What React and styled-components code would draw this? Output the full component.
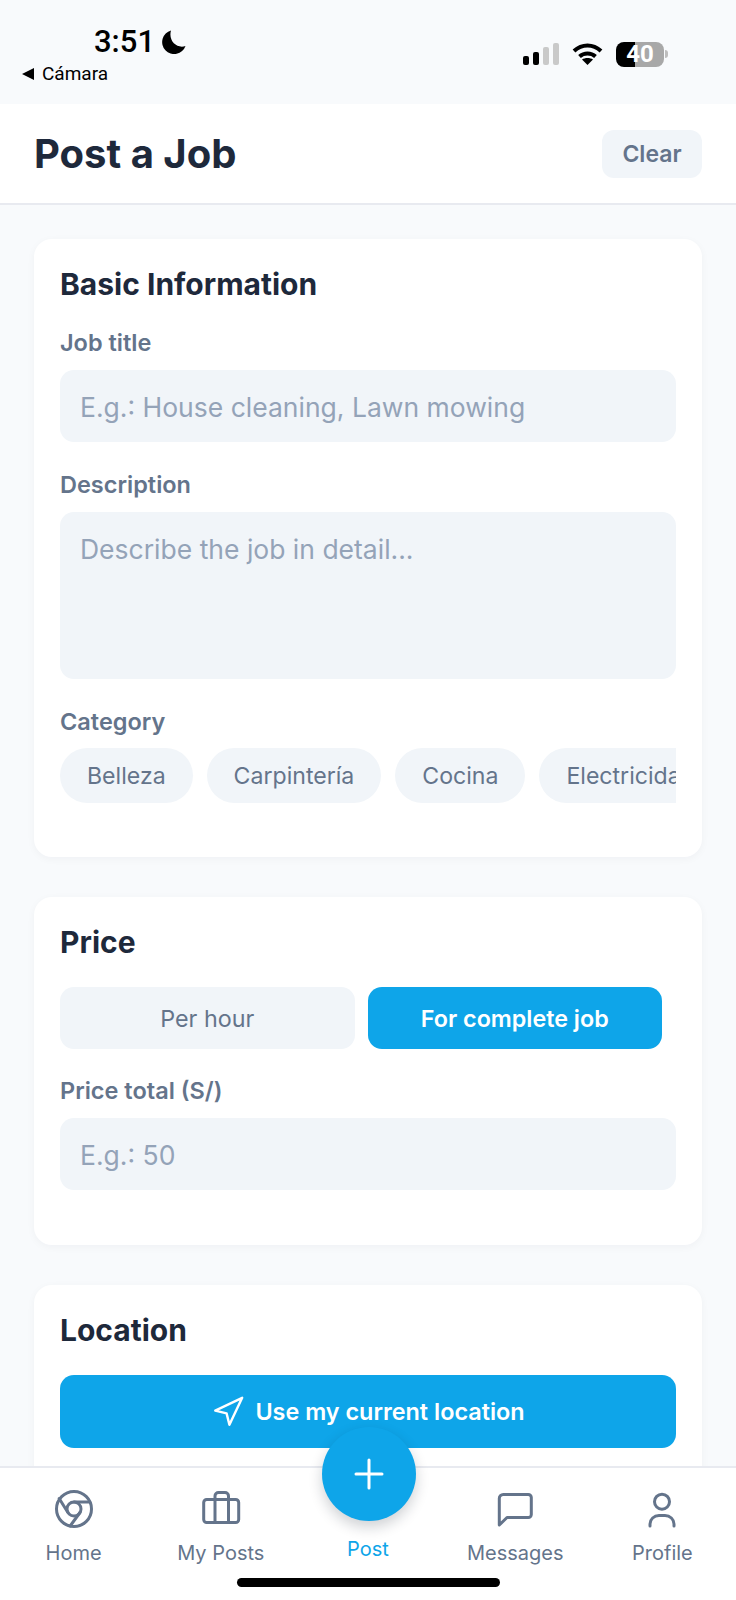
import React from 'react';
import styled, { createGlobalStyle } from 'styled-components';

const GlobalStyle = createGlobalStyle`
  html, body { margin: 0; padding: 0; background: #f8fafc; }
  * { box-sizing: border-box; }
  body { font-family: Inter, "Liberation Sans", sans-serif; }
`;

const Screen = styled.div`
  position: relative;
  width: 736px;
  height: 1600px;
  overflow: hidden;
  background: #f8fafc;
  display: flex;
  flex-direction: column;
`;

const StatusBar = styled.div`
  height: 104px;
  flex-shrink: 0;
  display: flex;
  justify-content: space-between;
  padding: 24px 68px 0 22px;
  color: #000;
`;

const StatusLeft = styled.div`
  display: flex;
  flex-direction: column;
`;

const TimeRow = styled.div`
  display: flex;
  align-items: center;
  gap: 7px;
  padding-left: 72px;
  font-size: 31px;
  line-height: 36px;
  font-weight: 500;
  font-family: Roboto, Inter, sans-serif;
`;

const BackRow = styled.div`
  display: flex;
  align-items: center;
  gap: 8px;
  margin-top: 3px;
  font-size: 19px;
  line-height: 22px;
  font-family: Roboto, Inter, sans-serif;
`;

const StatusRight = styled.div`
  display: flex;
  align-items: center;
  gap: 13px;
  height: 26px;
  margin-top: 17px;
`;

const Signal = styled.div`
  display: flex;
  align-items: flex-end;
  gap: 4px;
  height: 22px;
`;

const SignalBar = styled.span`
  width: 6px;
  height: ${p => p.$h}px;
  border-radius: 2px;
  background: ${p => (p.$on ? '#000' : '#c9c9c9')};
`;

const Battery = styled.div`
  width: 48px;
  height: 25px;
  border-radius: 8px;
  background: linear-gradient(90deg, #000 40%, #a8a8a8 40%);
  color: #fff;
  font-size: 24px;
  font-weight: 700;
  line-height: 25px;
  text-align: center;
  font-family: Roboto, Inter, sans-serif;
`;

const BatteryTip = styled.span`
  width: 3px;
  height: 8px;
  margin-left: -12px;
  border-radius: 0 3px 3px 0;
  background: #bdbdbd;
`;

const Header = styled.header`
  height: 101px;
  flex-shrink: 0;
  background: #fff;
  border-bottom: 2px solid #e8eaf0;
  padding: 0 34px;
  display: flex;
  align-items: center;
  justify-content: space-between;
`;

const Title = styled.h1`
  margin: 0;
  font-size: 40px;
  font-weight: 700;
  color: #1e293b;
`;

const ClearButton = styled.button`
  width: 100px;
  height: 48px;
  border: none;
  border-radius: 12px;
  background: #f1f5f9;
  color: #64748b;
  font: 600 23px Inter, sans-serif;
`;

const Content = styled.main`
  padding: 34px 34px 0;
  display: flex;
  flex-direction: column;
  gap: 40px;
`;

const Card = styled.section`
  background: #fff;
  border-radius: 18px;
  padding: 26px 26px 0;
  height: ${p => p.$height}px;
  flex-shrink: 0;
  box-shadow: 0 2px 8px rgba(15, 23, 42, 0.04);
`;

const CardTitle = styled.h2`
  margin: 0 0 26px;
  font-size: 30px;
  line-height: 38px;
  font-weight: 700;
  color: #1e293b;
`;

const Label = styled.div`
  font-size: 23.5px;
  line-height: 28px;
  font-weight: 600;
  color: #64748b;
  margin-bottom: 13px;
`;

const Field = styled.div`
  background: #f1f5f9;
  border-radius: 14px;
  height: ${p => p.$height || 72}px;
  padding: ${p => (p.$multi ? '20px' : '2px')} 20px 0;
  margin-bottom: 29px;
  display: flex;
  align-items: ${p => (p.$multi ? 'flex-start' : 'center')};
  font-size: 26.5px;
  line-height: 34px;
  color: #94a3b8;
`;

const ChipRow = styled.div`
  display: flex;
  gap: 14px;
  margin-top: -1px;
  overflow: hidden;
`;

const Chip = styled.div`
  flex-shrink: 0;
  height: 55px;
  padding: 0 27px;
  border-radius: 28px;
  background: #f1f5f9;
  color: #64748b;
  font-size: 23.1px;
  display: flex;
  align-items: center;
`;

const Toggle = styled.div`
  display: flex;
  gap: 13px;
  padding-right: 14px;
  margin-bottom: 28px;
`;

const ToggleOption = styled.div`
  flex: 1;
  height: 62px;
  border-radius: 14px;
  display: flex;
  align-items: center;
  justify-content: center;
  font-size: 23.3px;
  font-weight: ${p => (p.$active ? 600 : 400)};
  color: ${p => (p.$active ? '#fff' : '#64748b')};
  background: ${p => (p.$active ? '#0ea5e9' : '#f1f5f9')};
`;

const LocationButton = styled.button`
  width: 100%;
  height: 73px;
  border: none;
  border-radius: 14px;
  background: #0ea5e9;
  color: #fff;
  font: 600 23.4px Inter, sans-serif;
  display: flex;
  align-items: center;
  justify-content: center;
  gap: 10px;
`;

const TabBar = styled.nav`
  position: absolute;
  left: 0;
  right: 0;
  bottom: 0;
  height: 134px;
  background: #fff;
  border-top: 2px solid #e8eaf0;
  display: grid;
  grid-template-columns: repeat(5, 1fr);
`;

const Tab = styled.div`
  display: flex;
  flex-direction: column;
  align-items: center;
  padding-top: ${p => (p.$raised ? '67px' : '21px')};
  gap: 10px;
  font-size: 20px;
  line-height: 28px;
  color: ${p => (p.$active ? '#0ea5e9' : '#64748b')};
`;

const TabIcon = styled.svg`
  width: 46px;
  height: 40px;
  fill: none;
  stroke: #64748b;
  stroke-width: 3;
  stroke-linecap: round;
  stroke-linejoin: round;
`;

const Fab = styled.div`
  position: absolute;
  left: 322px;
  top: 1427px;
  width: 94px;
  height: 94px;
  border-radius: 50%;
  background: #0ea5e9;
  box-shadow: 0 6px 14px rgba(15, 23, 42, 0.2);
  display: flex;
  align-items: center;
  justify-content: center;
`;

const HomeIndicator = styled.div`
  position: absolute;
  left: 237px;
  bottom: 13px;
  width: 263px;
  height: 9px;
  border-radius: 5px;
  background: #000;
`;

const chips = ['Belleza', 'Carpintería', 'Cocina', 'Electricidad'];

export default function App() {
  return (
    <Screen>
      <GlobalStyle />
      <StatusBar>
        <StatusLeft>
          <TimeRow>
            3:51
            <svg width="24" height="24" viewBox="0 0 24 24">
              <path d="M9 0.5 A12 12 0 1 0 23.5 16 C15 19 6 11 9 0.5 Z" fill="#000" />
            </svg>
          </TimeRow>
          <BackRow>
            <svg width="12" height="12" viewBox="0 0 12 12">
              <path d="M12 0 V12 L0 6 Z" fill="#000" />
            </svg>
            Cámara
          </BackRow>
        </StatusLeft>
        <StatusRight>
          <Signal>
            <SignalBar $h={9} $on />
            <SignalBar $h={13} $on />
            <SignalBar $h={18} />
            <SignalBar $h={22} />
          </Signal>
          <svg width="31" height="22" viewBox="0 0 31 22" fill="none" stroke="#000" strokeWidth="4">
            <path d="M2 8 C10 0.5 21 0.5 29 8" />
            <path d="M7.5 13.5 C12 9.5 19 9.5 23.5 13.5" />
            <path d="M15.5 22 L10 16.5 C13 14.5 18 14.5 21 16.5 Z" fill="#000" stroke="none" />
          </svg>
          <Battery>40</Battery>
          <BatteryTip />
        </StatusRight>
      </StatusBar>

      <Header>
        <Title>Post a Job</Title>
        <ClearButton>Clear</ClearButton>
      </Header>

      <Content>
        <Card $height={618}>
          <CardTitle>Basic Information</CardTitle>
          <Label>Job title</Label>
          <Field>E.g.: House cleaning, Lawn mowing</Field>
          <Label>Description</Label>
          <Field $multi $height={167}>Describe the job in detail...</Field>
          <Label>Category</Label>
          <ChipRow>
            {chips.map(c => <Chip key={c}>{c}</Chip>)}
          </ChipRow>
        </Card>

        <Card $height={348}>
          <CardTitle>Price</CardTitle>
          <Toggle>
            <ToggleOption>Per hour</ToggleOption>
            <ToggleOption $active>For complete job</ToggleOption>
          </Toggle>
          <Label>Price total (S/)</Label>
          <Field>E.g.: 50</Field>
        </Card>

        <Card $height={300}>
          <CardTitle>Location</CardTitle>
          <LocationButton>
            <svg width="34" height="34" viewBox="0 0 24 24" fill="none" stroke="#fff" strokeWidth="1.7" strokeLinecap="round" strokeLinejoin="round">
              <polygon points="3 11 22 2 13 21 11 13 3 11" />
            </svg>
            Use my current location
          </LocationButton>
        </Card>
      </Content>

      <TabBar>
        <Tab>
          <TabIcon viewBox="0 0 46 40">
            <circle cx="23" cy="20" r="17.5" />
            <circle cx="23" cy="20" r="7" />
            <path d="M23 13 H38.5 M8.2 9.5 L16.9 23.5 M19.2 37 L29 23.5" />
          </TabIcon>
          Home
        </Tab>
        <Tab>
          <TabIcon viewBox="0 0 46 40">
            <rect x="5.7" y="10.5" width="35" height="23" rx="3" />
            <path d="M17 33.5 V7 a3.5 3.5 0 0 1 3.5 -3.5 h6.5 a3.5 3.5 0 0 1 3.5 3.5 V33.5" />
          </TabIcon>
          My Posts
        </Tab>
        <Tab $active $raised>Post</Tab>
        <Tab>
          <TabIcon viewBox="0 0 46 40">
            <path d="M7.3 36 V9.5 a4 4 0 0 1 4 -4 H36.3 a3 3 0 0 1 3 3 V25.5 a3 3 0 0 1 -3 3 H15 Z" />
          </TabIcon>
          Messages
        </Tab>
        <Tab>
          <TabIcon viewBox="0 0 46 40">
            <circle cx="23" cy="12.7" r="7.5" />
            <path d="M11 37 V35 A9 8.5 0 0 1 20 26.5 H26 A9 8.5 0 0 1 35 35 V37" />
          </TabIcon>
          Profile
        </Tab>
      </TabBar>

      <Fab>
        <svg width="30" height="40" viewBox="0 0 30 40" stroke="#fff" strokeWidth="3" strokeLinecap="round">
          <path d="M15 6 V34 M2 20 H28" />
        </svg>
      </Fab>
      <HomeIndicator />
    </Screen>
  );
}
